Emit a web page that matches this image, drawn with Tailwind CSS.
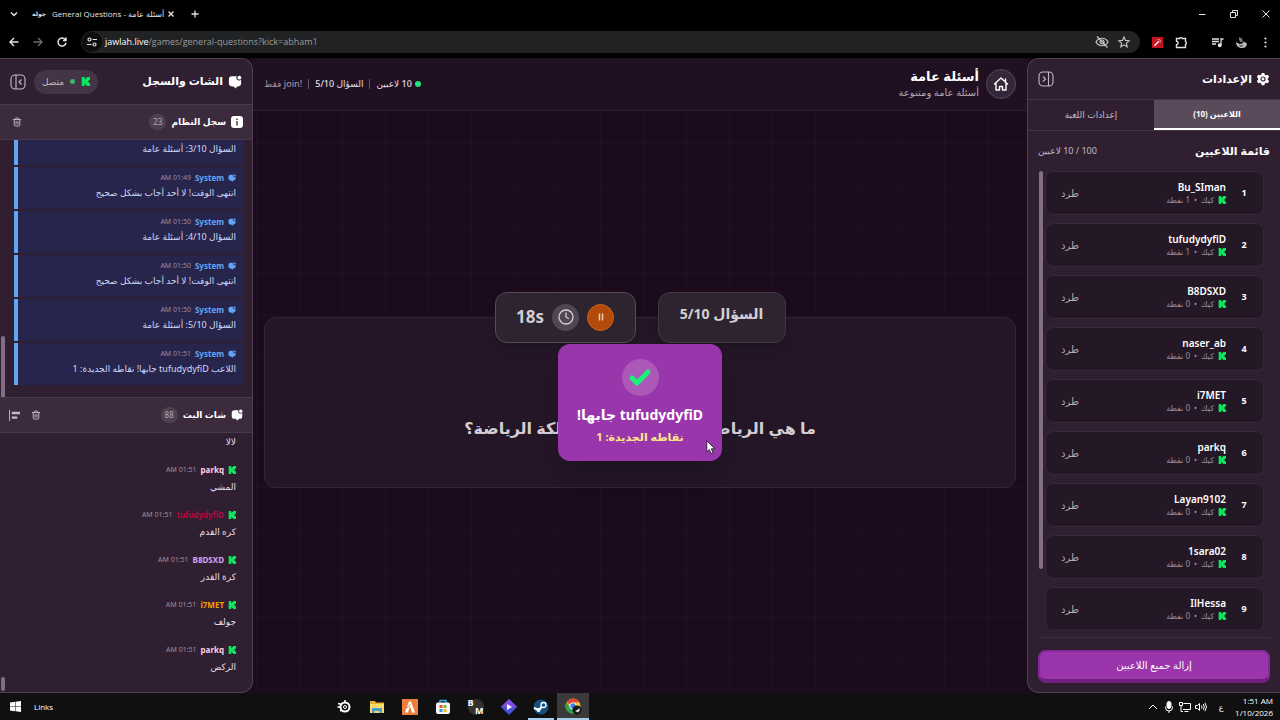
<!DOCTYPE html>
<html lang="ar" dir="rtl">

<head>
    <meta charset="UTF-8">
    <meta name="viewport" content="width=device-width, initial-scale=1.0">
    <title>General Questions - أسئلة عامة</title>
    <style>
        body {
            font-family: 'Noto Sans', 'DejaVu Sans', sans-serif;
        }

        .chrome-ui {
            font-family: 'Open Sans', 'DejaVu Sans', sans-serif;
        }

        .board {
            background-image:
                linear-gradient(to right, rgba(255, 255, 255, 0.02) 1px, transparent 1px),
                linear-gradient(to bottom, rgba(255, 255, 255, 0.02) 1px, transparent 1px);
            background-size: 43px 43px;
            background-position: 3px 32px;
        }
    </style>
    <script src="https://cdn.jsdelivr.net/npm/@tailwindcss/browser@4"></script>
</head>

<body class="flex flex-col h-screen overflow-hidden bg-black text-white">

    <!-- Icons -->
    <svg class="hidden">
        <symbol id="kick" viewBox="0 0 12 12">
            <path fill="#0be65c" d="M1 0h4v3h1V1.500h1.500V0H12v4h-1.500v1.200H9.300v1.600h1.200V8H12v4H7.500v-1.500H6V9H5v3H1z" />
        </symbol>
        <symbol id="chat" viewBox="0 0 16 16">
            <path fill="currentColor" d="M4.500 1.500h5.700a2.900 2.900 0 0 0 4.800 3.500V9.500a3.500 3.500 0 0 1-3.500 3.500H10.500L8.500 15.500 6.500 13h-2A3.500 3.500 0 0 1 1 9.500V5a3.500 3.500 0 0 1 3.500-3.500z" />
            <circle fill="currentColor" cx="13" cy="3" r="2.200" />
        </symbol>
        <symbol id="trash" viewBox="0 0 16 16">
            <path fill="none" stroke="currentColor" stroke-width="1.500" stroke-linecap="round" stroke-linejoin="round" d="M2 4h12M5.500 4V2.500a1 1 0 0 1 1-1h3a1 1 0 0 1 1 1V4M3.500 4v8.500a2 2 0 0 0 2 2h5a2 2 0 0 0 2-2V4M6.500 7v4.500M9.500 7v4.500" />
        </symbol>
    </svg>

    <!-- Browser -->
    <header class="chrome-ui bg-black text-[#e3e3e3] shrink-0" dir="ltr">
        <div class="flex items-center h-7 text-[8px]">
            <button class="ml-2 size-3" aria-label="Search tabs">
                <svg viewBox="0 0 12 12" fill="none" stroke="currentColor" stroke-width="1.500"><path d="M3 4.500l3 3 3-3" /></svg>
            </button>
            <span class="ml-3 mr-[6px] text-[6px] font-bold">جوله</span>
            <span class="whitespace-nowrap">General Questions - أسئلة عامة</span>
            <button class="ml-px size-3" aria-label="Close tab">
                <svg viewBox="0 0 12 12" fill="none" stroke="currentColor" stroke-width="1.300"><path d="M3.500 3.500l5 5M8.500 3.500l-5 5" /></svg>
            </button>
            <button class="ml-3 size-3" aria-label="New tab">
                <svg viewBox="0 0 12 12" fill="none" stroke="currentColor" stroke-width="1.300"><path d="M6 2.500v7M2.500 6h7" /></svg>
            </button>
            <div class="ml-auto mr-2 flex gap-5">
                <button class="size-3" aria-label="Minimize"><svg viewBox="0 0 12 12" fill="none" stroke="currentColor"><path d="M3 6.500h6.500" /></svg></button>
                <button class="size-3" aria-label="Restore"><svg viewBox="0 0 12 12" fill="none" stroke="currentColor"><path d="M2.500 4.500h5v5h-5zM4.500 4V2.500h5v5H8" /></svg></button>
                <button class="size-3" aria-label="Close"><svg viewBox="0 0 12 12" fill="none" stroke="currentColor"><path d="M2.500 2.500l7 7M9.500 2.500l-7 7" /></svg></button>
            </div>
        </div>
        <div class="flex items-center h-[30px] pb-[2px] pl-2">
            <div class="flex items-center gap-3 w-[73px]">
                <button class="size-3" aria-label="Back"><svg viewBox="0 0 12 12" fill="none" stroke="currentColor" stroke-width="1.400"><path d="M10.500 6H2M6 2L2 6l4 4" /></svg></button>
                <button class="size-3 text-[#6b6b6b]" aria-label="Forward"><svg viewBox="0 0 12 12" fill="none" stroke="currentColor" stroke-width="1.400"><path d="M1.500 6H10M6 2l4 4-4 4" /></svg></button>
                <button class="size-3" aria-label="Reload"><svg viewBox="0 0 12 12" fill="none" stroke="currentColor" stroke-width="1.500"><path d="M9.500 4A4 4 0 1 0 10 6.800M10 1.500v3H7" /></svg></button>
            </div>
            <div class="flex items-center grow h-[22px] rounded-full bg-[#202223] px-px">
                <span class="size-5 rounded-full bg-[#0c0d0d] grid place-items-center">
                    <svg class="size-3" viewBox="0 0 12 12" fill="none" stroke="currentColor" stroke-width="1.200"><circle cx="3.500" cy="3.500" r="1.500" /><circle cx="8.500" cy="8.500" r="1.500" /><path d="M6.500 3.500H11M1 8.500h4.500" /></svg>
                </span>
                <p class="ml-[3px] text-[9px] text-[#9a9c9e]"><span class="text-white">jawlah.live</span>/games/general-questions?kick=abham1</p>
                <div class="ml-auto mr-2 flex gap-2 text-[#c7c7c7]">
                    <svg class="size-[14px]" viewBox="0 0 14 14" fill="none" stroke="currentColor" stroke-width="1.200"><path d="M1 7c2.500-5 9.500-5 12 0-2.500 5-9.500 5-12 0zM2 1.500l10.500 11" /><circle cx="7" cy="7" r="2" /></svg>
                    <svg class="size-[14px]" viewBox="0 0 14 14" fill="none" stroke="currentColor" stroke-width="1.100"><path d="M7 2l1.500 3.400 3.700.4-2.800 2.400.8 3.600L7 9.900l-3.200 1.900.8-3.600L1.800 5.800l3.700-.4z" /></svg>
                </div>
            </div>
            <div class="flex items-center w-[140px] pl-3">
                <span class="size-[11px] bg-[#c4121f] grid place-items-center">
                    <svg class="size-[9px]" viewBox="0 0 10 10" stroke="#fff" fill="none"><path d="M1.500 8.500l5-5" stroke-width="1.500" /><path d="M7 1v1.500M9 3H7.500M4.500 1.500l.7.700M8.500 5.500l-.7-.7" stroke-width=".8" /></svg>
                </span>
                <svg class="ml-3 size-[13px]" viewBox="0 0 13 13" fill="none" stroke="currentColor" stroke-width="1.400"><path d="M1.500 2.500h3.200a1.400 1.400 0 0 1 2.600 0h3.200v3.200a1.400 1.400 0 0 1 0 2.600v3.200h-9V8.600a1.600 1.600 0 0 0 0-3.200z" /></svg>
                <svg class="ml-[23px] size-[13px]" viewBox="0 0 13 13" fill="none" stroke="currentColor" stroke-width="1.300"><path d="M1 3h7M1 5.500h7M1 8h4M10 9.500V3h2.500" /><circle cx="8.700" cy="9.300" r="1.300" fill="currentColor" /></svg>
                <svg class="ml-[11px] size-[13px]" viewBox="0 0 13 13"><path fill="#bbb" d="M1 6.500c1.500 0 2 .5 3 1.500l3.500-.5 1-2L12 7.500c0 3-2.500 5-5.500 4.500C3.500 12 1 9.500 1 6.500z" /><path fill="#777" d="M4 1l3 1.500 1 3-2.500.5L4 4z" /><path fill="#111" d="M4 9.500h4.500l-1.500 1H5z" /></svg>
                <svg class="ml-[11px] size-[13px]" viewBox="0 0 13 13" fill="currentColor"><circle cx="6.500" cy="2.500" r="1.100" /><circle cx="6.500" cy="6.500" r="1.100" /><circle cx="6.500" cy="10.500" r="1.100" /></svg>
            </div>
        </div>
    </header>

    <div class="flex grow min-h-0 bg-[#1c0b1d]">

        <!-- Settings -->
        <aside class="flex flex-col w-[253px] shrink-0 bg-[#2f1f31] border border-[#514153] border-r-0 rounded-l-xl overflow-hidden">
            <div class="flex items-center justify-between h-10 px-[10px] shrink-0">
                <h2 class="flex items-center gap-1 text-[11px] font-bold">
                    <svg class="size-[14px]" viewBox="0 0 16 16" fill="none"><path fill="#fff" d="M6.500 1h3l.5 2 1.500.8 2-.7 1.500 2.600L13.500 7.200v1.600l1.500 1.500-1.500 2.600-2-.7-1.500.8-.5 2h-3L6 13l-1.500-.8-2 .7L1 10.300l1.500-1.500V7.200L1 5.700l1.500-2.600 2 .7L6 3z" /><circle cx="8" cy="8" r="2.300" stroke="#2f1f31" stroke-width="1.300" /></svg>
                    الإعدادات
                </h2>
                <button class="size-4 text-[#c4bac5]" aria-label="طي الإعدادات">
                    <svg viewBox="0 0 16 16" fill="none" stroke="currentColor" stroke-width="1.100"><rect x="1" y="1" width="14" height="14" rx="4" /><path d="M10.500 1v14M5 5.500L7.500 8 5 10.500" /></svg>
                </button>
            </div>
            <div class="grid grid-cols-2 h-8 shrink-0 border-y border-[#453547]">
                <button class="bg-[#5a4b5c] border-b-2 border-white text-[8px] font-bold">اللاعبين (10)</button>
                <button class="text-[9px] text-[#c4bac5] font-medium">إعدادات اللعبة</button>
            </div>
            <div class="flex items-center justify-between h-10 px-[10px] shrink-0">
                <h3 class="text-[11px] font-bold">قائمة اللاعبين</h3>
                <span class="text-[9px] text-[#c4bac5]">100 / 10 لاعبين</span>
            </div>
            <div class="flex grow min-h-0 pr-4 pl-[11px] gap-[2px]">
                <ul id="players" class="flex flex-col gap-2 grow min-h-0 overflow-hidden"></ul>
                <div class="w-1 h-[398px] rounded-full bg-[#826f85]"></div>
            </div>
            <div class="mx-[10px] mt-2 pt-3 pb-[9px] border-t border-[#3d2d3f] shrink-0">
                <button class="w-full h-[33px] rounded-lg bg-[#9a35ab] border-2 border-[#86299a] border-b-4 border-b-[#702080] text-[10px] font-medium">إزالة جميع اللاعبين</button>
            </div>
        </aside>

        <!-- Game -->
        <main class="flex flex-col grow min-w-0">
            <div class="flex items-center justify-between h-[53px] shrink-0 px-[11px] bg-[#201122] border-b border-[#302033]">
                <div class="flex items-center gap-[7px]">
                    <a href="#" class="size-[30px] rounded-full bg-[#35263a] border border-[#564659] grid place-items-center" aria-label="الرئيسية">
                        <svg class="size-4" viewBox="0 0 16 16" fill="none" stroke="#fff" stroke-width="1.400" stroke-linejoin="round" stroke-linecap="round"><path d="M1.500 8L8 2l6.500 6M3 7v7h3.500v-3.500h3V14H13V7M12.500 6V3" /></svg>
                    </a>
                    <div>
                        <h1 class="text-[13px] leading-4 font-bold">أسئلة عامة</h1>
                        <p class="text-[10px] leading-4 text-[#b5a9b7]">أسئلة عامة ومتنوعة</p>
                    </div>
                </div>
                <div class="flex items-center gap-[6px] text-[9px] font-medium text-[#e4dfe5]">
                    <span class="flex items-center gap-[3px]"><i class="size-[6px] rounded-full bg-[#22e37c]"></i>10 لاعبين</span>
                    <i class="w-px h-[10px] bg-[#65566a]"></i>
                    <span>السؤال 5/10</span>
                    <i class="w-px h-[10px] bg-[#65566a]"></i>
                    <span class="text-[#9b8f9e]">!join فقط</span>
                </div>
            </div>
            <div class="board relative flex items-center grow px-[11px]">
                <section class="relative flex flex-col items-center w-full h-[171px] rounded-xl bg-[#241627] border border-[#33253a]">
                    <div class="absolute -top-[26px] flex gap-[22px] text-[#d3ced4]">
                        <div class="flex justify-center w-32 h-[51px] pt-[10px] rounded-xl bg-[#2d2430] border border-[#413744] text-[14px] font-bold shadow-lg">السؤال 5/10</div>
                        <div class="flex items-center justify-center gap-2 w-[141px] h-[51px] rounded-xl bg-[#2d2430] border border-[#554c58] shadow-lg">
                            <button class="size-[27px] rounded-full bg-[#b24a0b] border border-[#cb6416] grid place-items-center" aria-label="إيقاف مؤقت">
                                <svg class="size-2" viewBox="0 0 8 8" stroke="#e6c9b3" stroke-width="1.500"><path d="M2.500 0.500v7M5.500 0.500v7" /></svg>
                            </button>
                            <span class="size-[27px] rounded-full bg-[#504753] grid place-items-center">
                                <svg class="size-4" viewBox="0 0 16 16" fill="none" stroke="currentColor" stroke-width="1.300" stroke-linecap="round"><circle cx="8" cy="8" r="7" /><path d="M8 4v4l2.500 1.500" /></svg>
                            </span>
                            <span class="text-[17px] font-bold">18s</span>
                        </div>
                    </div>
                    <p class="mt-[98px] text-[16px] leading-6 font-bold text-[#d3ced4] whitespace-nowrap">ما هي الرياضة التي يطلق عليها ملكة الرياضة؟</p>
                </section>

                <!-- Winner popup -->
                <div class="absolute inset-0 grid place-items-center">
                    <div class="flex flex-col items-center w-[164px] h-[117px] pt-[15px] rounded-xl bg-[#9a36ab] shadow-xl">
                        <span class="size-[37px] rounded-full bg-[#ab58b9] grid place-items-center">
                            <svg class="size-6" viewBox="0 0 24 24" fill="none" stroke="#1bf07b" stroke-width="5" stroke-linecap="round" stroke-linejoin="round"><path d="M4 13l5 5L20 7" /></svg>
                        </span>
                        <h2 class="mt-[7px] text-[14px] leading-6 font-bold whitespace-nowrap">tufudydyfiD جابها!</h2>
                        <p class="text-[11px] leading-5 font-bold text-[#ffe68a]">نقاطه الجديدة: 1</p>
                    </div>
                </div>
            </div>
        </main>

        <!-- Chat and log -->
        <aside class="flex flex-col w-[253px] shrink-0 bg-[#2f1f31] border border-[#514153] border-l-0 rounded-r-xl overflow-hidden">
            <div class="flex items-center justify-between h-[45px] px-[10px] shrink-0">
                <h2 class="flex items-center gap-[5px] text-[11px] font-bold">
                    <svg class="size-[14px]"><use href="#chat" /></svg>
                    الشات والسجل
                </h2>
                <div class="flex items-center gap-2">
                    <span class="flex items-center gap-[6px] h-6 px-2 rounded-full bg-[#443546] text-[9px] text-[#c4bac5]">
                        <svg class="size-[9px]"><use href="#kick" /></svg>
                        <i class="size-[5px] rounded-full bg-[#3fb567]"></i>
                        متصل
                    </span>
                    <button class="size-4 text-[#c4bac5]" aria-label="طي الشات">
                        <svg viewBox="0 0 16 16" fill="none" stroke="currentColor" stroke-width="1.100"><rect x="1" y="1" width="14" height="14" rx="4" /><path d="M6 1v14M11.500 5.500L9 8l2.500 2.500" /></svg>
                    </button>
                </div>
            </div>
            <div class="flex items-center justify-between h-9 px-[9px] shrink-0 bg-[#3b2b3d] border-y border-[#493a4b]">
                <h3 class="flex items-center gap-[5px] text-[9px] font-bold">
                    <svg class="size-3" viewBox="0 0 12 12"><rect width="12" height="12" rx="3" fill="#fff" /><path stroke="#3b2b3d" stroke-width="1.400" d="M6 5v4.500M6 2.500V4" /></svg>
                    سجل النظام
                    <span class="px-1 rounded-full bg-[#4f4051] text-[8px] leading-4 font-normal text-[#b5a9b7]">23</span>
                </h3>
                <button class="size-[10px] mx-[3px] text-[#c4bac5]" aria-label="مسح السجل"><svg class="size-[10px]"><use href="#trash" /></svg></button>
            </div>
            <div class="flex h-[257px] shrink-0">
                <ul id="log" class="flex flex-col justify-end gap-[2px] grow pr-2 pb-3 overflow-hidden"></ul>
                <div class="flex items-end w-[14px] pr-[9px] pl-px"><i class="w-1 h-[61px] rounded-t-full bg-[#826f85]"></i></div>
            </div>
            <div class="flex items-center justify-between h-9 px-[9px] shrink-0 bg-[#3b2b3d] border-y border-[#493a4b]">
                <h3 class="flex items-center gap-[5px] text-[9px] font-bold">
                    <svg class="size-3"><use href="#chat" /></svg>
                    شات البث
                    <span class="px-1 rounded-full bg-[#4f4051] text-[8px] leading-4 font-normal text-[#b5a9b7]">88</span>
                </h3>
                <div class="flex items-center gap-[11px] text-[#c4bac5]">
                    <button class="size-[10px]" aria-label="مسح الشات"><svg class="size-[10px]"><use href="#trash" /></svg></button>
                    <button class="size-[11px]" aria-label="المحاذاة"><svg viewBox="0 0 12 12" fill="currentColor"><path d="M0 0h1v12H0zM3 2h9v2.500H3zM3 7h6v2.500H3z" /></svg></button>
                </div>
            </div>
            <div class="flex grow min-h-0">
                <ul id="messages" class="flex flex-col justify-end gap-[11px] grow pr-4 pb-4 overflow-hidden"></ul>
                <div class="flex items-end w-[14px] pr-[9px] pl-px pb-px"><i class="w-1 h-[14px] rounded-full bg-[#826f85]"></i></div>
            </div>
        </aside>
    </div>

    <!-- Taskbar -->
    <footer class="chrome-ui flex items-center h-[27px] shrink-0 bg-[#101010] text-[8px]" dir="ltr">
        <div class="flex items-center w-[327px] pl-[10px] gap-[13px]">
            <button aria-label="Start"><svg class="size-[11px]" viewBox="0 0 11 11" fill="#fff"><path d="M0 1.500l5-.7v4.400H0zM5.500.700L11 0v5.200H5.500zM0 5.800h5v4.400l-5-.7zM5.500 5.800H11V11l-5.500-.7z" /></svg></button>
            <span>Links</span>
        </div>
        <div class="flex h-full">
            <button class="w-[33px] grid place-items-center" aria-label="SteelSeries">
                <svg class="size-4" viewBox="0 0 16 16" fill="none" stroke="#fff"><circle cx="9" cy="8" r="4.500" stroke-width="2" /><circle cx="9" cy="8" r="1.500" /><path stroke-width="1.500" d="M2 4.500l4 1M1.500 8H5M9 1v2.500M4 12l2-1" /></svg>
            </button>
            <button class="w-[33px] grid place-items-center" aria-label="Files">
                <svg class="size-4" viewBox="0 0 16 16"><path fill="#e9b33b" d="M1 2h5l1 1.500h8V8H1z" /><path fill="#fbd96b" d="M1 5h14v9H1z" /><path fill="#4a9fc9" d="M3 9h10v5h-2.500v-2h-5v2H3z" /></svg>
            </button>
            <button class="w-[33px] grid place-items-center" aria-label="FiveM">
                <svg class="size-4" viewBox="0 0 16 16"><path fill="#ee7e3b" d="M0 0h16v16H0z" /><path fill="#fff" d="M7 2.500h2l4 11h-3L8 7l-2 6.500H3z" /><path stroke="#ee7e3b" d="M5 9l3.500-4" /></svg>
            </button>
            <button class="w-[33px] grid place-items-center" aria-label="Store">
                <svg class="size-4" viewBox="0 0 16 16"><path fill="none" stroke="#39b5e8" stroke-width="1.300" d="M5 4V1.500h6V4" /><rect x="1" y="3.500" width="14" height="11.500" rx="2" fill="#f4f6f8" /><path fill="#e8502f" d="M4.500 6h3v3h-3z" /><path fill="#7cb82f" d="M8.500 6h3v3h-3z" /><path fill="#2a9fe0" d="M4.500 10h3v3h-3z" /><path fill="#f5b81c" d="M8.500 10h3v3h-3z" /></svg>
            </button>
            <button class="w-[33px] grid place-items-center" aria-label="BM">
                <span class="size-4 rounded-full bg-[#33322e] text-[9px] leading-2 font-bold text-left">B<span class="block text-right">M</span></span>
            </button>
            <button class="w-[33px] grid place-items-center" aria-label="Clips">
                <svg class="size-4" viewBox="0 0 16 16"><path fill="#4a50dc" d="M8 0l8 8-8 8-8-8z" /><path fill="#7c4fe0" d="M8 0l8 8H0z" /><path fill="#fff" d="M6 5l5 3-5 3z" /></svg>
            </button>
            <button class="w-8 grid place-items-center relative" aria-label="Steam">
                <svg class="size-4" viewBox="0 0 16 16"><circle cx="8" cy="8" r="7.500" fill="#15507f" /><path fill="none" stroke="#fff" stroke-width="2" d="M1 9l5 2 4-4.500" /><circle cx="10.500" cy="6" r="2.500" fill="#15507f" stroke="#fff" stroke-width="1.300" /><circle cx="5.500" cy="11" r="2" fill="#fff" /></svg>
                <i class="absolute bottom-0 inset-x-[3px] h-[2px] bg-[#a5cdee]"></i>
            </button>
            <button class="w-8 grid place-items-center relative bg-[#3a3a3a]" aria-label="Chrome">
                <svg class="size-[17px]" viewBox="0 0 17 17"><circle cx="8" cy="8" r="7.500" fill="#f7c52c" /><path fill="#de4535" d="M8 8L1.500 4.200A7.500 7.500 0 0 1 14.500 4.200L8 4.500z" /><path fill="#2da04f" d="M1.500 4.200A7.500 7.500 0 0 0 8 15.500L10 10 5 9.500z" /><circle cx="8" cy="8" r="3.500" fill="#fff" /><circle cx="8" cy="8" r="2.700" fill="#3f7fe8" /><circle cx="12" cy="12" r="4.500" fill="#161616" /><path fill="#ddd" d="M10 13l3-1.500 1-1.500 1 2-2 2.500z" /></svg>
                <i class="absolute bottom-0 inset-x-0 h-[2px] bg-[#a5cdee]"></i>
            </button>
        </div>
        <div class="ml-auto flex items-center gap-1 pr-[7px]">
            <svg class="size-3" viewBox="0 0 12 12" fill="none" stroke="#fff"><path d="M2 8l4-4 4 4" /></svg>
            <svg class="size-3" viewBox="0 0 12 12" fill="none" stroke="#fff"><rect x="4" y="0.500" width="4" height="7" rx="2" fill="#fff" /><path d="M2.500 5.500v1a3.500 3.500 0 0 0 7 0v-1M6 10v2" /></svg>
            <svg class="size-3" viewBox="0 0 12 12" fill="none" stroke="#fff"><path d="M4.500 2.500h7v6H4M5.500 10.500h4M.5 1.500h3v3h-3zM2 4.500v6h2" /></svg>
            <svg class="size-3" viewBox="0 0 12 12" fill="none" stroke="#fff"><path d="M.5 4.500h2l2-2v7l-2-2h-2zM6.500 4.500q1 1.500 0 3M8.300 3q2 3 0 6M10 1.800q3 4.200 0 8.400" /></svg>
            <span class="w-5 text-center">ع</span>
            <div class="text-right leading-3"><div>1:51 AM</div><div>1/10/2026</div></div>
        </div>
    </footer>

    <!-- Mouse pointer -->
    <svg class="absolute left-[706px] top-[440px] w-[10px] h-[15px]" viewBox="0 0 10 15"><path fill="#fff" stroke="#111" stroke-width=".8" d="M.8.8v11l2.500-2.300 1.700 4 2-.9-1.700-3.800h3.500z" /></svg>

    <script>
        const players = [
            ["Bu_SIman", 1], ["tufudydyfiD", 1], ["B8DSXD", 0], ["naser_ab", 0], ["i7MET", 0],
            ["parkq", 0], ["Layan9102", 0], ["1sara02", 0], ["IlHessa", 0]
        ];
        const logs = [
            ["01:49", "السؤال 3/10: أسئلة عامة"],
            ["01:49", "انتهى الوقت! لا أحد أجاب بشكل صحيح"],
            ["01:50", "السؤال 4/10: أسئلة عامة"],
            ["01:50", "انتهى الوقت! لا أحد أجاب بشكل صحيح"],
            ["01:50", "السؤال 5/10: أسئلة عامة"],
            ["01:51", "اللاعب tufudydyfiD جابها! نقاطه الجديدة: 1"]
        ];
        const messages = [
            ["parkq", "#fbcfe0", "01:51", "لالا"],
            ["parkq", "#fbcfe0", "01:51", "المشي"],
            ["tufudydyfiD", "#b5093f", "01:51", "كره القدم"],
            ["B8DSXD", "#d3a5fb", "01:51", "كرة القدر"],
            ["i7MET", "#f59e0b", "01:51", "جولف"],
            ["parkq", "#fbcfe0", "01:51", "الركض"]
        ];

        document.getElementById("players").innerHTML = players.map(([name, points], i) => `
            <li class="flex items-center h-11 shrink-0 pr-[15px] pl-[15px] rounded-lg bg-[#251826] border border-[#38293a]">
                <span class="w-2 text-[9px] font-bold text-center">${i + 1}</span>
                <div class="mr-[14px]">
                    <p class="text-[10px] leading-[14px] font-semibold"><bdi>${name}</bdi></p>
                    <p class="flex items-center gap-1 text-[8px] leading-3 text-[#9b8f9e]"><svg class="size-2"><use href="#kick" /></svg>كيك <span>•</span> ${points} نقطة</p>
                </div>
                <button class="mr-auto text-[10px] text-[#b5a9b7]">طرد</button>
            </li>`).join("");

        document.getElementById("log").innerHTML = logs.map(([time, text]) => `
            <li class="h-[42px] shrink-0 pt-1 pr-2 rounded-r bg-[#28254c] border-l-4 border-[#62a5f5]">
                <p class="flex items-center gap-1 text-[8px] leading-[14px]"><svg class="size-2 text-[#62a5f5]"><use href="#chat" /></svg><b class="text-[#62a5f5]">System</b> <span class="text-[7px] text-[#978ba3]">${time} AM</span></p>
                <p class="text-[9px] leading-4 text-[#cfd9f8] whitespace-nowrap">${text}</p>
            </li>`).join("");

        document.getElementById("messages").innerHTML = messages.map(([name, color, time, text]) => `
            <li class="shrink-0">
                <p class="flex items-center gap-1 text-[8px] leading-4"><svg class="size-2"><use href="#kick" /></svg><b style="color: ${color}">${name}</b> <span class="text-[7px] text-[#9b8f9e]">${time} AM</span></p>
                <p class="text-[9px] leading-[18px] text-[#e4dfe5]">${text}</p>
            </li>`).join("");
    </script>
</body>

</html>
